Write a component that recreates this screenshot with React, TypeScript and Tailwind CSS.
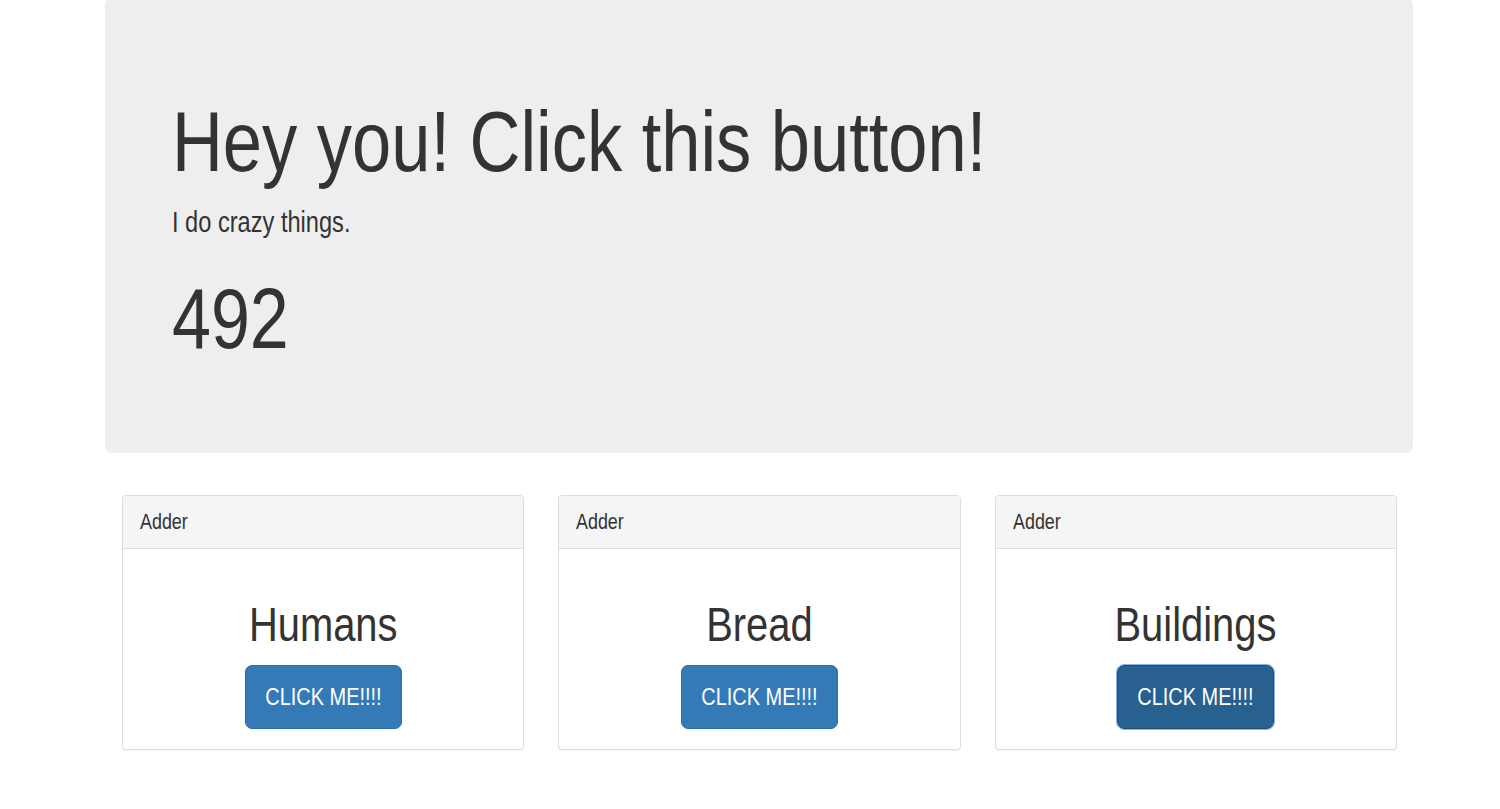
import React from "react";

function Panel({ title, focused }: { title: string; focused?: boolean }) {
  return (
    <div className="rounded-[4px] border border-[#dddddd] bg-white shadow-[0_1px_1px_rgba(0,0,0,0.05)] overflow-hidden">
      <div className="h-[53px] flex items-center px-[17px] bg-[#f5f5f5] border-b border-[#dddddd]">
        <span className="inline-block origin-left scale-x-[0.814] text-[22px] leading-[30px] text-[#333333]">
          Adder
        </span>
      </div>
      <div className="flex flex-col items-center pt-[47px] pb-[20px]">
        <div className="h-[56px] flex justify-center">
          <span className="inline-block scale-x-[0.814] text-[49px] leading-[56px] text-[#333333]">
            {title}
          </span>
        </div>
        <button
          className={
            focused
              ? "mt-[13px] w-[157px] h-[64px] rounded-[7px] border border-[#204d74] bg-[#286090] text-white flex items-center justify-center outline outline-1 outline-[#8ab4f0]"
              : "mt-[13px] w-[157px] h-[64px] rounded-[7px] border border-[#2e6da4] bg-[#337ab7] text-white flex items-center justify-center"
          }
        >
          <span className="inline-block scale-x-[0.814] text-[24.5px] leading-[30px] whitespace-nowrap">
            CLICK ME!!!!
          </span>
        </button>
      </div>
    </div>
  );
}

export default function App() {
  return (
    <div
      className="w-[1500px] h-[809px] bg-white overflow-hidden text-[#333333]"
      style={{ fontFamily: '"Liberation Sans", Arial, Helvetica, sans-serif' }}
    >
      <div className="ml-[105px] w-[1308px] bg-[#eeeeee] rounded-b-[7px] rounded-t-[4px] px-[67px] pt-[93px] pb-[87px]">
        <h1 className="h-[96px] whitespace-nowrap">
          <span className="inline-block origin-left scale-x-[0.819] text-[86px] leading-[96px] font-normal">
            Hey you! Click this button!
          </span>
        </h1>
        <p className="mt-[13px] h-[40px]">
          <span className="inline-block origin-left scale-x-[0.814] text-[29px] leading-[40px]">
            I do crazy things.
          </span>
        </p>
        <h1 className="mt-[28px] h-[96px]">
          <span className="inline-block origin-left scale-x-[0.814] text-[86px] leading-[96px] font-normal">
            492
          </span>
        </h1>
      </div>
      <div className="ml-[122px] mt-[42px] w-[1275px] grid grid-cols-3 gap-[34px]">
        <Panel title="Humans" />
        <Panel title="Bread" />
        <Panel title="Buildings" focused />
      </div>
    </div>
  );
}
